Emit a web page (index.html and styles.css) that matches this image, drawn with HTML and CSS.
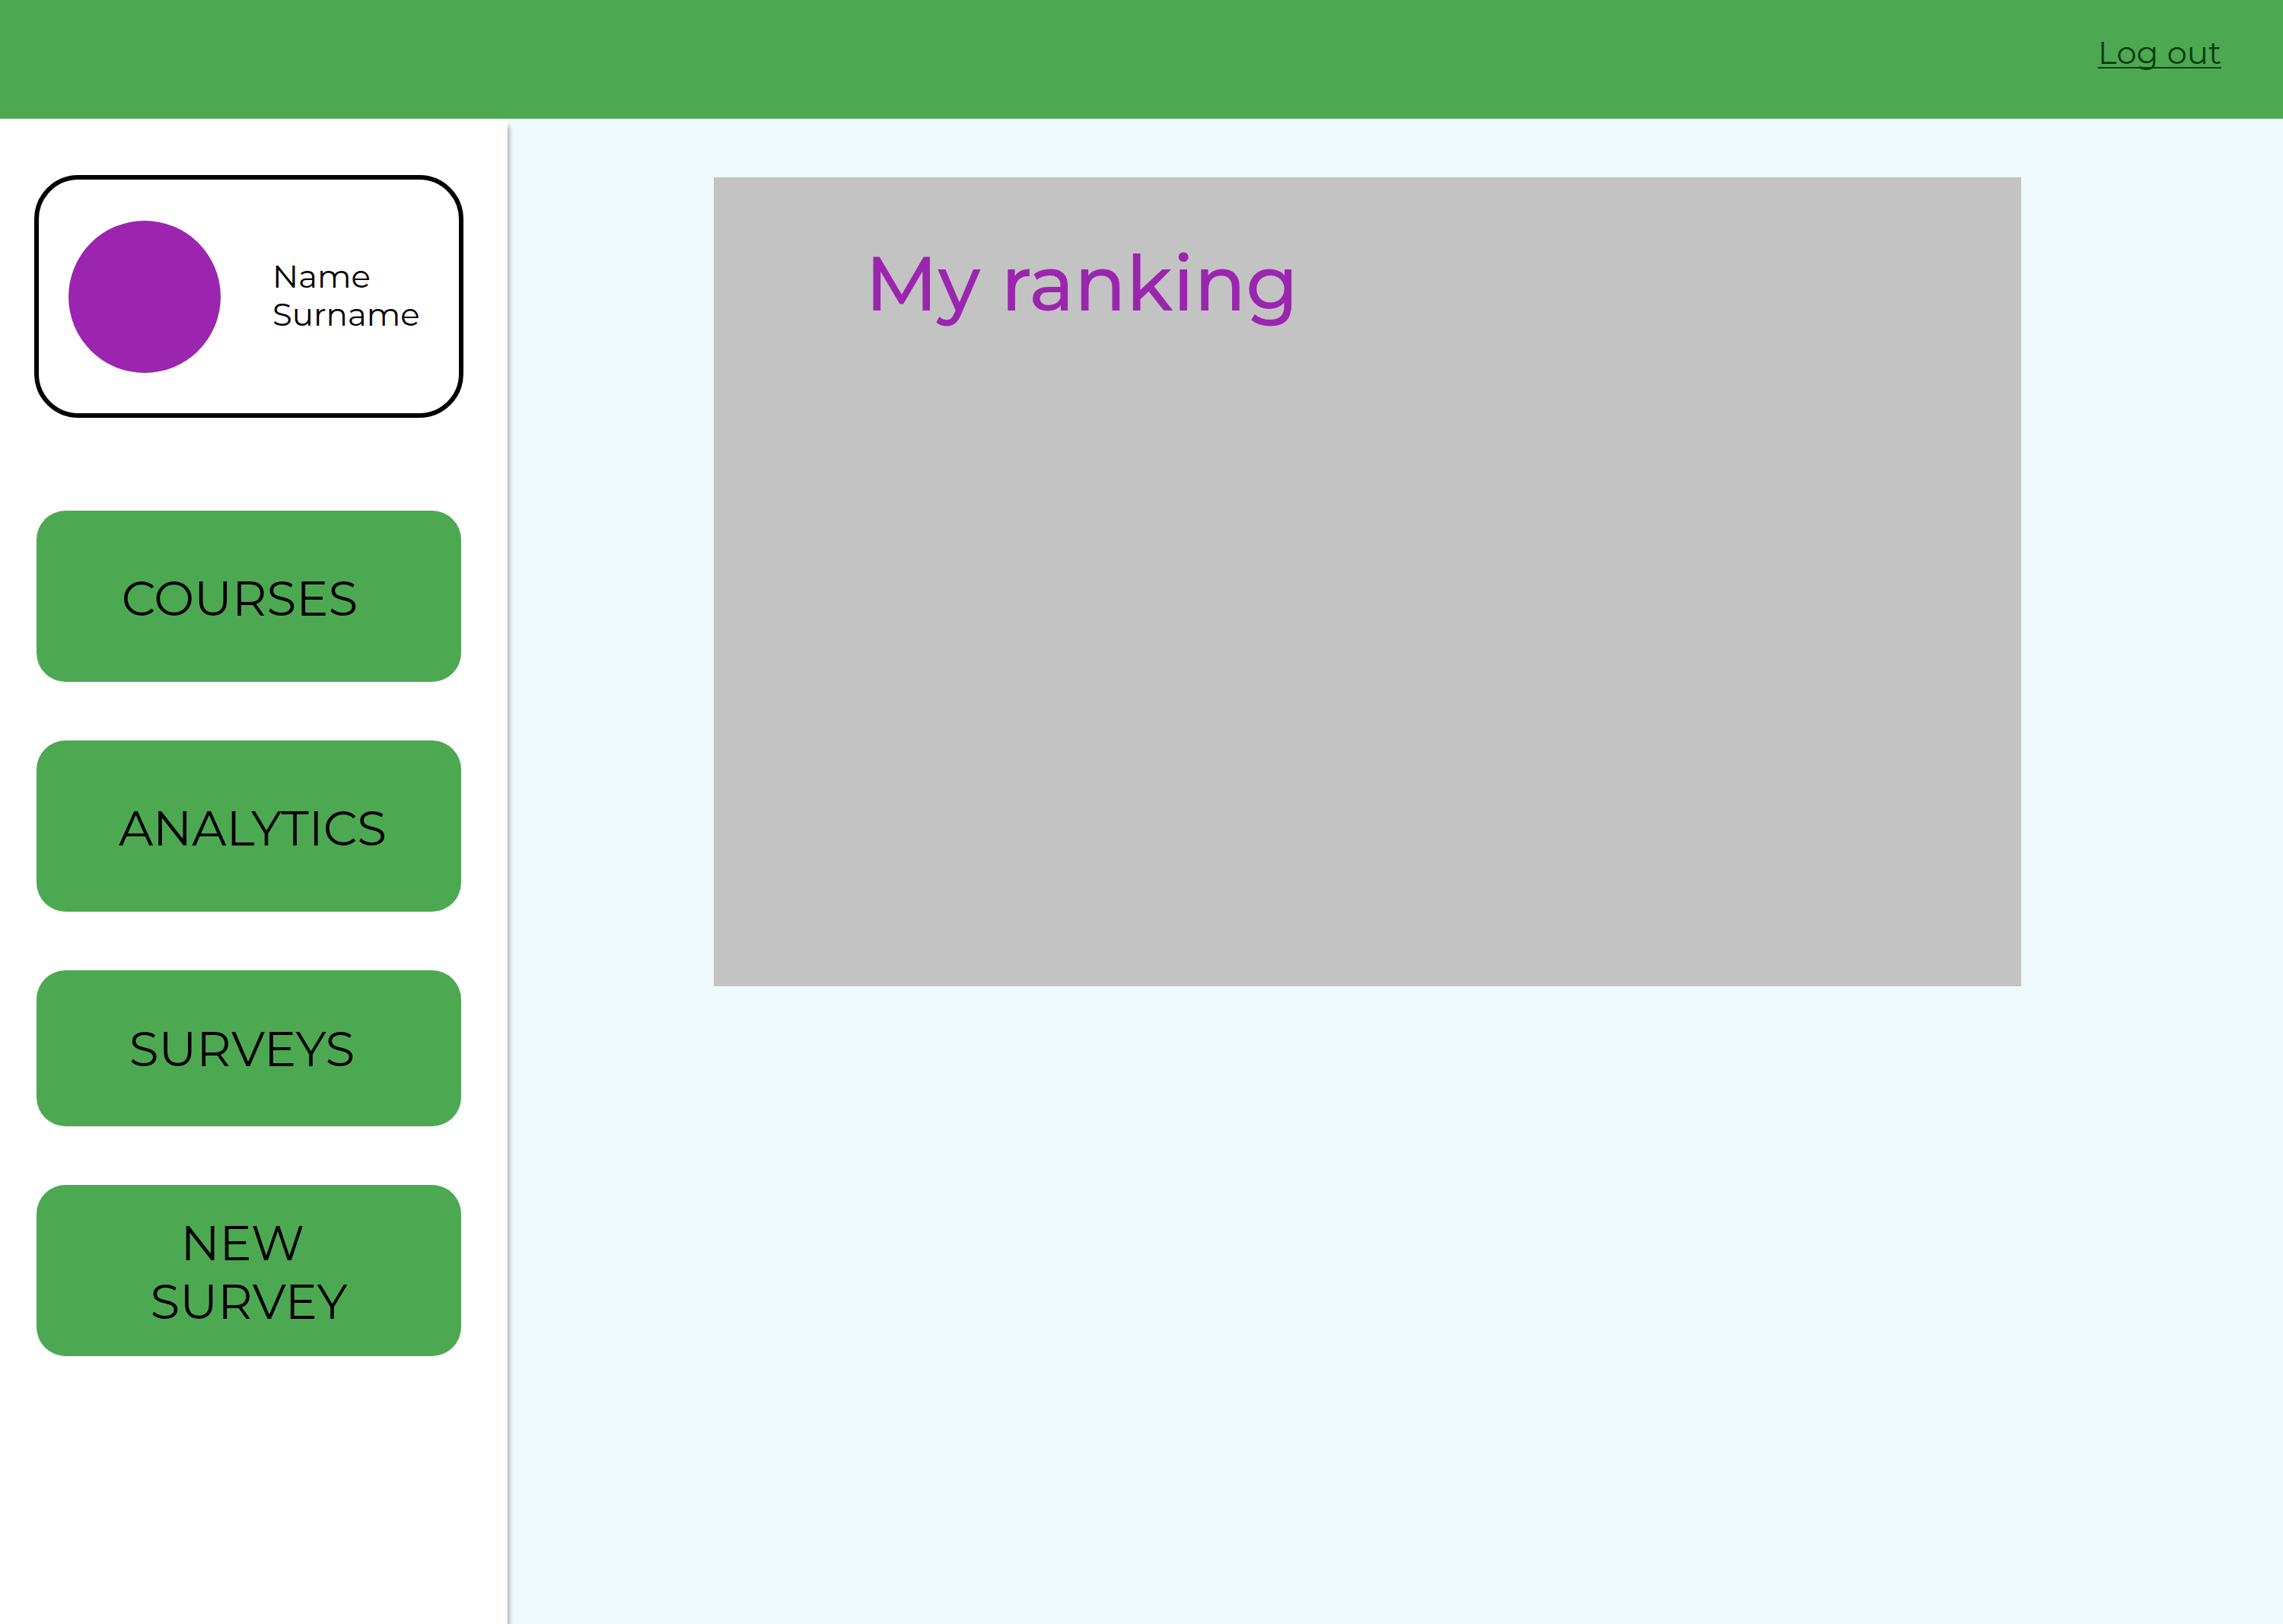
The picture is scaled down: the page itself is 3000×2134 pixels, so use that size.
FILE: index.html
```html
<!DOCTYPE html>
<html lang="en">
<head>
  <meta charset="utf-8">
  <meta name="viewport" content="width=device-width, initial-scale=1">
  <title>My ranking</title>
  <link rel="stylesheet" href="styles.css">
</head>
<body>
  <div class="page">
    <header class="topbar">
      <a class="logout" href="#logout">Log out</a>
    </header>
    <div class="layout">
      <aside class="sidebar">
        <section class="profile">
          <div class="avatar"></div>
          <p class="profile-name">Name<br>Surname</p>
        </section>
        <nav class="menu">
          <a class="menu-item menu-item-courses" href="#courses">COURSES</a>
          <a class="menu-item menu-item-analytics" href="#analytics">ANALYTICS</a>
          <a class="menu-item menu-item-surveys" href="#surveys">SURVEYS</a>
          <a class="menu-item menu-item-new" href="#new-survey">NEW 
SURVEY</a>
        </nav>
      </aside>
      <main class="content">
        <section class="ranking">
          <h1 class="ranking-title">My ranking</h1>
        </section>
      </main>
    </div>
  </div>
</body>
</html>
```
FILE: styles.css
```css
* {
  box-sizing: border-box;
}

body {
  margin: 0;
  font-family: Montserrat, Inter, sans-serif;
  color: #000;
  background: #f0f9fc;
}

.page {
  display: flex;
  flex-direction: column;
  min-height: 100vh;
}

.topbar {
  position: relative;
  z-index: 1;
  display: flex;
  justify-content: flex-end;
  min-height: 156px;
  padding: 44px 81px;
  background: #4da951;
}

.logout {
  font-size: 42px;
  line-height: 50px;
  color: #0a3d10;
  text-decoration-thickness: 2px;
  text-underline-offset: 4px;
  text-decoration-skip-ink: none;
}

.layout {
  display: grid;
  flex: 1;
  grid-template-columns: 667px 1fr;
}

.sidebar {
  display: flex;
  flex-direction: column;
  gap: 122px;
  padding: 74px 58px 74px 45px;
  background: #fff;
  box-shadow: 2px 10px 6px rgba(0, 0, 0, 0.35);
}

.profile {
  display: flex;
  align-items: center;
  gap: 68px;
  height: 319px;
  padding: 0 39px;
  border: 6px solid #000;
  border-radius: 58px;
}

.avatar {
  flex: none;
  width: 200px;
  height: 200px;
  border-radius: 50%;
  background: #9b25af;
}

.profile-name {
  margin: 0;
  padding-bottom: 4px;
  font-size: 42px;
  line-height: 50px;
}

.menu {
  display: flex;
  flex-direction: column;
  gap: 77px;
  padding: 0 3px;
}

.menu-item {
  display: flex;
  align-items: center;
  justify-content: center;
  min-height: 225px;
  padding-top: 6px;
  border-radius: 38px;
  background: #4da951;
  color: #000;
  font-size: 63px;
  line-height: 77px;
  text-align: center;
  text-decoration: none;
  white-space: pre;
}

.menu-item-courses {
  padding-right: 24px;
}

.menu-item-analytics {
  padding-left: 10px;
}

.menu-item-surveys {
  min-height: 205px;
  padding-top: 2px;
  padding-right: 18px;
}

.menu-item-new {
  padding-top: 4px;
}

.content {
  padding: 77px 344px 77px 271px;
}

.ranking {
  min-height: 1063px;
  padding: 78px 199px;
  background: #c3c3c3;
}

.ranking-title {
  margin: 0;
  font-size: 100px;
  font-weight: 500;
  line-height: 122px;
  color: #9b25af;
}
```
